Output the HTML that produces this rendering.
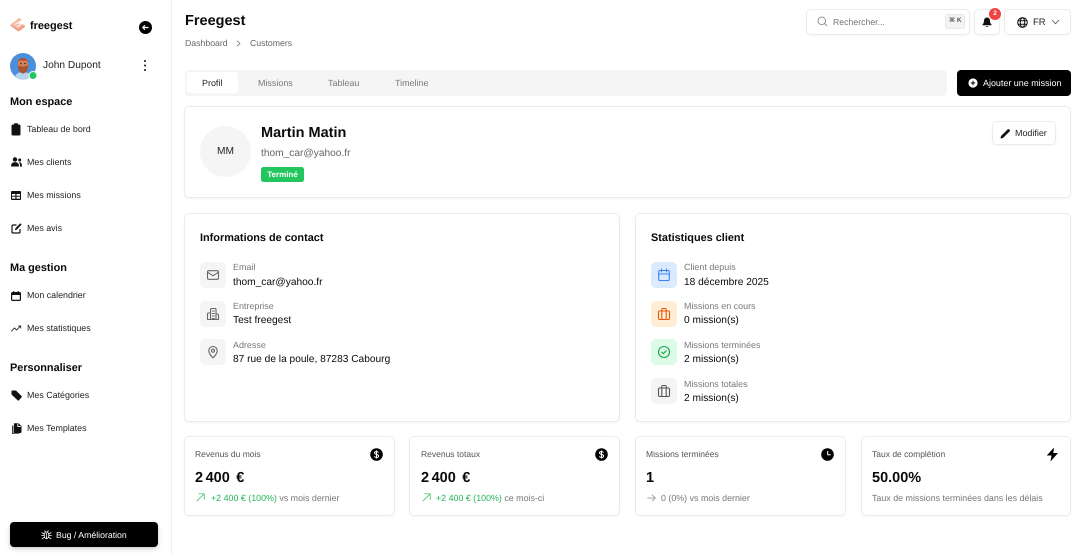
<!DOCTYPE html>
<html lang="fr"><head><meta charset="utf-8"><title>Freegest</title>
<style>
*{box-sizing:border-box}
html,body{margin:0;padding:0}
body{width:1080px;height:556px;overflow:hidden;background:#fff;font-family:"Liberation Sans",sans-serif;color:#0a0a0a;position:relative;text-rendering:geometricPrecision}
.t{position:absolute;white-space:nowrap;line-height:1}
.b{position:absolute;background:#fff;border:1px solid #ebebeb;border-radius:5px;box-shadow:0 1px 2px rgba(0,0,0,.04)}
svg{position:absolute;display:block}
.nav{font-size:8.9px;color:#222}
.h{font-size:10.9px;font-weight:700;color:#0a0a0a}
.lab{font-size:8.95px;color:#777}
.val{font-size:10.18px;color:#0a0a0a}
.ib{position:absolute;width:26px;height:26px;border-radius:5px;background:#f5f5f5}
.ib svg{left:6px;top:6px;width:14px;height:14px;fill:none;stroke:#666;stroke-width:1.1;stroke-linecap:round;stroke-linejoin:round}
.kl{font-size:8.5px;color:#555}
.kv{font-size:14.5px;font-weight:700;color:#0a0a0a}
.ks{font-size:8.9px;color:#777}
.g{color:#22b558}
.tab{font-size:8.95px;color:#777}
</style></head><body>

<!-- sidebar -->
<div style="position:absolute;left:171px;top:0;width:1px;height:556px;background:#efefef"></div>
<svg style="left:9px;top:17px" width="18" height="16" viewBox="0 0 18 16"><path d="M1 8 L10 1 L13 2.500 L8 6 L16 8 L16 10 L11 14 L9 14.500 Z" fill="#f6b9a5"/><path d="M2 8.500 L9 13 L15 9" fill="none" stroke="#ee8a6e" stroke-width="1"/><path d="M6 7.500 L10 5 M8 9.500 L12 7.500" stroke="#fff" stroke-width="1"/></svg>
<div class="t" style="left:30px;top:21px;font-size:10.9px;font-weight:700">freegest</div>
<svg style="left:139px;top:21px" width="13" height="13" viewBox="0 0 13 13"><circle cx="6.500" cy="6.500" r="6.500" fill="#000"/><path d="M9.500 6.500H4M6 4.300 3.800 6.500 6 8.700" fill="none" stroke="#fff" stroke-width="1.200"/></svg>

<svg style="left:10px;top:53px" width="28" height="28" viewBox="0 0 28 28"><circle cx="13" cy="13" r="13" fill="#4a90dc"/><path d="M5 24 C6 20 10 19 13 19 C16 19 20 20 21 24 A13 13 0 0 1 5 24Z" fill="#b5d3ea"/><rect x="8" y="5" width="10" height="12" rx="4" fill="#d9805c"/><path d="M7.500 10 C7.500 3.500 18.500 3.500 18.500 10 L17 7.500 H9Z" fill="#a44b2a"/><path d="M8 12 C9 14 17 14 18 12 C18.500 18 15 20.500 13 20.500 C11 20.500 7.500 18 8 12Z" fill="#a9542f"/><circle cx="11" cy="10.500" r=".8" fill="#222"/><circle cx="15" cy="10.500" r=".8" fill="#222"/><circle cx="23" cy="22.500" r="4" fill="#22c55e" stroke="#fff" stroke-width="1"/></svg>
<div class="t" style="left:43px;top:61px;font-size:10.18px;color:#222">John Dupont</div>
<svg style="left:143px;top:59px" width="4" height="13" viewBox="0 0 4 13"><circle cx="2" cy="2" r="1" fill="#111"/><circle cx="2" cy="6.500" r="1" fill="#111"/><circle cx="2" cy="11" r="1" fill="#111"/></svg>

<div class="t h" style="left:10px;top:97px">Mon espace</div>
<svg style="left:11px;top:123px" width="10" height="13" viewBox="0 0 10 13"><rect x=".5" y="1.500" width="9" height="11" rx="1.500" fill="#111"/><rect x="3" y=".3" width="4" height="2.400" rx=".6" fill="#111"/></svg>
<div class="t nav" style="left:27px;top:125px">Tableau de bord</div>
<svg style="left:11px;top:157px" width="11" height="10" viewBox="0 0 11 10"><circle cx="4" cy="2.500" r="2.200" fill="#111"/><path d="M0 9.500C0 6 2 5.300 4 5.300S8 6 8 9.500Z" fill="#111"/><circle cx="8.700" cy="3" r="1.500" fill="#111"/><path d="M8.500 5.300C10 5.300 11 6.500 11 9.500H9C9 7.500 8.800 6.300 8 5.600Z" fill="#111"/></svg>
<div class="t nav" style="left:27px;top:158px">Mes clients</div>
<svg style="left:11px;top:191px" width="10" height="9" viewBox="0 0 10 9"><rect width="10" height="9" rx="1" fill="#111"/><path d="M1 3h3.400v1.800H1zM5.500 3H9v1.800H5.500zM1 5.800h3.400v1.800H1zM5.500 5.800H9v1.800H5.500z" fill="#fff"/></svg>
<div class="t nav" style="left:27px;top:191px">Mes missions</div>
<svg style="left:11px;top:223px" width="11" height="11" viewBox="0 0 11 11"><path d="M5.500 2H2a1 1 0 0 0-1 1v6a1 1 0 0 0 1 1h6a1 1 0 0 0 1-1V6" fill="none" stroke="#111" stroke-width="1.200"/><path d="M4 7.200 4.400 5.200 8.800.8a.8.800 0 0 1 1.300 1.300L5.800 6.600Z" fill="#111"/></svg>
<div class="t nav" style="left:27px;top:224px">Mes avis</div>

<div class="t h" style="left:10px;top:263px">Ma gestion</div>
<svg style="left:11px;top:291px" width="10" height="10" viewBox="0 0 10 10"><rect x=".6" y="1.600" width="8.800" height="7.800" rx="1" fill="none" stroke="#111" stroke-width="1.200"/><rect x=".6" y="1.600" width="8.800" height="2.400" fill="#111"/><path d="M2.800 0v2M7.200 0v2" stroke="#111" stroke-width="1.100"/></svg>
<div class="t nav" style="left:27px;top:291px">Mon calendrier</div>
<svg style="left:11px;top:325px" width="11" height="7" viewBox="0 0 11 7"><path d="M.3 6.300 3.500 3l2 2 4-4M7.300 1h2.400v2.400" fill="none" stroke="#111" stroke-width=".8"/></svg>
<div class="t nav" style="left:27px;top:324px">Mes statistiques</div>

<div class="t h" style="left:10px;top:363px">Personnaliser</div>
<svg style="left:11px;top:390px" width="11" height="11" viewBox="0 0 11 11"><path d="M.5 1.200a.7.700 0 0 1 .7-.7H5l5.500 5.500a1 1 0 0 1 0 1.400L8 10.300a1 1 0 0 1-1.400 0L.5 4.500Z" fill="#111"/></svg>
<div class="t nav" style="left:27px;top:391px">Mes Catégories</div>
<svg style="left:11px;top:423px" width="11" height="11" viewBox="0 0 11 11"><path d="M3 .3h4.500L10.500 3v6a1 1 0 0 1-1 1H3Z" fill="#111"/><path d="M1.800 2.500V11h6.500" fill="none" stroke="#111" stroke-width="1.200"/><path d="M6.800.6V3.400h3" fill="none" stroke="#fff" stroke-width=".9"/></svg>
<div class="t nav" style="left:27px;top:424px">Mes Templates</div>

<div style="position:absolute;left:10px;top:522px;width:148px;height:25px;background:#000;border-radius:4px;box-shadow:0 2px 5px rgba(0,0,0,.2)"></div>
<svg style="left:41px;top:529px" width="11" height="11" viewBox="0 0 11 11" fill="none" stroke="#fff" stroke-width=".8"><ellipse cx="5.500" cy="6.300" rx="2.300" ry="3.400"/><path d="M3.600 1.500 4.500 3M7.400 1.500 6.500 3M.6 3.500 3.300 5M10.400 3.500 7.700 5M.3 6.500h2.900M7.800 6.500h2.900M.8 10 3.400 8.200M10.200 10 7.600 8.200M5.500 4v5.500"/></svg>
<div class="t" style="left:56px;top:531px;font-size:8.73px;color:#fff">Bug / Amélioration</div>

<!-- header -->
<div class="t" style="left:185px;top:14px;font-size:14.5px;font-weight:700">Freegest</div>
<div class="t" style="left:185px;top:39px;font-size:8.73px;color:#666">Dashboard</div>
<svg style="left:236px;top:40px" width="5" height="7" viewBox="0 0 5 7"><path d="M1 .7 4 3.500 1 6.300" fill="none" stroke="#666" stroke-width=".7"/></svg>
<div class="t" style="left:250px;top:39px;font-size:8.73px;color:#666">Customers</div>

<div class="b" style="left:806px;top:9px;width:164px;height:26px"></div>
<svg style="left:817px;top:16px" width="11" height="11" viewBox="0 0 11 11"><circle cx="4.800" cy="4.800" r="3.800" fill="none" stroke="#777" stroke-width=".8"/><path d="M7.600 7.600 10 10" stroke="#777" stroke-width=".8"/></svg>
<div class="t" style="left:833px;top:18px;font-size:8.73px;color:#777">Rechercher...</div>
<div style="position:absolute;left:945px;top:14px;width:20px;height:15px;background:#f3f3f3;border:1px solid #e8e8e8;border-radius:3px"></div>
<div class="t" style="left:949px;top:18px;font-size:6.500px;font-weight:700;color:#555;font-family:'Liberation Sans','DejaVu Sans',sans-serif">⌘ K</div>

<div class="b" style="left:974px;top:9px;width:26px;height:26px"></div>
<svg style="left:982px;top:17px" width="10" height="11" viewBox="0 0 10 11"><path d="M5 .5C3 .5 2 2 2 3.800c0 2.700-1.500 3.700-1.500 3.700v.8h9v-.8S8 6.500 8 3.800C8 2 7 .5 5 .5Z" fill="#111"/><path d="M3.700 9.300a1.400 1.400 0 0 0 2.600 0Z" fill="#111"/></svg>
<div style="position:absolute;left:989px;top:8px;width:12px;height:12px;background:#ef4444;border-radius:50%;color:#fff;font-size:6.500px;font-weight:700;text-align:center;line-height:12px">2</div>

<div class="b" style="left:1004px;top:9px;width:67px;height:26px"></div>
<svg style="left:1017px;top:17px" width="11" height="11" viewBox="0 0 11 11" fill="none" stroke="#111" stroke-width="1"><circle cx="5.500" cy="5.500" r="4.800"/><ellipse cx="5.500" cy="5.500" rx="2.200" ry="4.800"/><path d="M1 3.800h9M1 7.200h9"/></svg>
<div class="t" style="left:1033px;top:18px;font-size:9.450px;color:#222">FR</div>
<svg style="left:1051px;top:19px" width="9" height="6" viewBox="0 0 9 6"><path d="M1 1 4.500 4.800 8 1" fill="none" stroke="#555" stroke-width=".8"/></svg>

<!-- tabs -->
<div style="position:absolute;left:185px;top:70px;width:762px;height:26px;background:#f5f5f5;border-radius:4px"></div>
<div style="position:absolute;left:187px;top:72px;width:51px;height:21px;background:#fff;border-radius:3px"></div>
<div class="t" style="left:202px;top:78.500px;font-size:8.950px;color:#222">Profil</div>
<div class="t tab" style="left:258px;top:78.500px">Missions</div>
<div class="t tab" style="left:328px;top:78.500px">Tableau</div>
<div class="t tab" style="left:395px;top:78.500px">Timeline</div>

<div style="position:absolute;left:957px;top:70px;width:114px;height:26px;background:#000;border-radius:4px"></div>
<svg style="left:968px;top:78px" width="10" height="10" viewBox="0 0 10 10"><circle cx="5" cy="5" r="4.600" fill="#fff"/><path d="M5 2.800v4.400M2.800 5h4.400" stroke="#000" stroke-width="1"/></svg>
<div class="t" style="left:983px;top:78.500px;font-size:8.950px;color:#fff">Ajouter une mission</div>

<!-- profile -->
<div class="b" style="left:184px;top:106px;width:887px;height:92px"></div>
<div style="position:absolute;left:200px;top:126px;width:51px;height:51px;background:#f5f5f5;border-radius:50%;text-align:center;line-height:51px;font-size:10.180px;color:#222">MM</div>
<div class="t" style="left:261px;top:126px;font-size:14.500px;font-weight:700">Martin Matin</div>
<div class="t" style="left:261px;top:149px;font-size:10.180px;color:#666">thom_car@yahoo.fr</div>
<div style="position:absolute;left:261px;top:167px;width:43px;height:15px;background:#22c55e;border-radius:2.500px;color:#fff;font-size:8px;font-weight:700;text-align:center;line-height:15px">Terminé</div>
<div class="b" style="left:992px;top:121px;width:64px;height:24px"></div>
<svg style="left:1000px;top:128px" width="11" height="11" viewBox="0 0 11 11"><path d="M.5 10.500 1 8 7.800 1.200a.8.800 0 0 1 1.100 0l.9.900a.8.800 0 0 1 0 1.100L3 10Z" fill="#111"/></svg>
<div class="t" style="left:1015px;top:129px;font-size:8.950px;color:#222">Modifier</div>

<!-- contact -->
<div class="b" style="left:184px;top:213px;width:436px;height:209px"></div>
<div class="t" style="left:200px;top:233px;font-size:10.900px;font-weight:700">Informations de contact</div>
<div class="ib" style="left:200px;top:262px"><svg viewBox="0 0 14 14"><rect x="1.500" y="2.700" width="11" height="8.600" rx="1.300"/><path d="M1.500 4.200 7 7.800l5.500-3.600"/></svg></div>
<div class="t lab" style="left:233px;top:263px">Email</div>
<div class="t val" style="left:233px;top:278px">thom_car@yahoo.fr</div>
<div class="ib" style="left:200px;top:301px"><svg viewBox="0 0 14 14"><path d="M4.500 12.500V2.500a1 1 0 0 1 1-1h3.500a1 1 0 0 1 1 1v10M4.500 6H2.500a1 1 0 0 0-1 1v5.500h11V8a1 1 0 0 0-1-1H10M6.300 4h2M6.300 6.500h2M6.300 9h2M6.300 11.500h2"/></svg></div>
<div class="t lab" style="left:233px;top:302px">Entreprise</div>
<div class="t val" style="left:233px;top:316px">Test freegest</div>
<div class="ib" style="left:200px;top:339px"><svg viewBox="0 0 14 14"><path d="M7 12.800S2.800 9 2.800 5.700a4.200 4.200 0 0 1 8.400 0C11.200 9 7 12.800 7 12.800Z"/><circle cx="7" cy="5.700" r="1.500"/></svg></div>
<div class="t lab" style="left:233px;top:341px">Adresse</div>
<div class="t val" style="left:233px;top:355px">87 rue de la poule, 87283 Cabourg</div>

<!-- stats -->
<div class="b" style="left:635px;top:213px;width:436px;height:209px"></div>
<div class="t" style="left:651px;top:233px;font-size:10.900px;font-weight:700">Statistiques client</div>
<div class="ib" style="left:651px;top:262px;background:#dbeafe"><svg viewBox="0 0 14 14" style="stroke:#3b82f6"><rect x="1.700" y="2.500" width="10.600" height="10" rx="1.300"/><path d="M1.700 6h10.600M4.500 1v3M9.500 1v3"/></svg></div>
<div class="t lab" style="left:684px;top:263px">Client depuis</div>
<div class="t val" style="left:684px;top:278px">18 décembre 2025</div>
<div class="ib" style="left:651px;top:301px;background:#ffedd5"><svg viewBox="0 0 14 14" style="stroke:#ea580c"><rect x="1.500" y="4" width="11" height="8.500" rx="1.200"/><path d="M4.800 4V2.500a1 1 0 0 1 1-1h2.400a1 1 0 0 1 1 1V4M4.800 4v8.500M9.200 4v8.500"/></svg></div>
<div class="t lab" style="left:684px;top:302px">Missions en cours</div>
<div class="t val" style="left:684px;top:316px">0 mission(s)</div>
<div class="ib" style="left:651px;top:339px;background:#dcfce7"><svg viewBox="0 0 14 14" style="stroke:#16a34a"><circle cx="7" cy="7" r="5.500"/><path d="M4.800 7.200 6.300 8.700 9.200 5.700"/></svg></div>
<div class="t lab" style="left:684px;top:341px">Missions terminées</div>
<div class="t val" style="left:684px;top:355px">2 mission(s)</div>
<div class="ib" style="left:651px;top:378px;background:#f3f4f6"><svg viewBox="0 0 14 14" style="stroke:#555"><rect x="1.500" y="4" width="11" height="8.500" rx="1.200"/><path d="M4.800 4V2.500a1 1 0 0 1 1-1h2.400a1 1 0 0 1 1 1V4M4.800 4v8.500M9.200 4v8.500"/></svg></div>
<div class="t lab" style="left:684px;top:380px">Missions totales</div>
<div class="t val" style="left:684px;top:394px">2 mission(s)</div>

<!-- KPI -->
<div class="b" style="left:184px;top:436px;width:211px;height:80px"></div>
<div class="t kl" style="left:195px;top:450px">Revenus du mois</div>
<svg style="left:370px;top:448px" width="13" height="13" viewBox="0 0 13 13"><circle cx="6.500" cy="6.500" r="6.300" fill="#000"/><path d="M8.500 4.600C8 3.800 7.300 3.500 6.400 3.500 5.300 3.500 4.500 4 4.500 4.900 4.500 6.900 8.600 5.900 8.600 8 8.600 9 7.700 9.500 6.500 9.500 5.500 9.500 4.800 9.100 4.400 8.400M6.500 2.500v8" fill="none" stroke="#fff" stroke-width="1"/></svg>
<div class="t kv" style="left:195px;top:471px">2<span style="margin-left:2.500px;word-spacing:2.500px">400 €</span></div>
<svg style="left:196px;top:493px" width="9" height="9" viewBox="0 0 9 9"><path d="M.7 8.300 8.200.8M2.400.8h5.800v5.800" fill="none" stroke="#22b558" stroke-width=".7"/></svg>
<div class="t ks" style="left:211px;top:494px"><span class="g">+2 400 € (100%)</span> vs mois dernier</div>

<div class="b" style="left:409px;top:436px;width:211px;height:80px"></div>
<div class="t kl" style="left:421px;top:450px">Revenus totaux</div>
<svg style="left:595px;top:448px" width="13" height="13" viewBox="0 0 13 13"><circle cx="6.500" cy="6.500" r="6.300" fill="#000"/><path d="M8.500 4.600C8 3.800 7.300 3.500 6.400 3.500 5.300 3.500 4.500 4 4.500 4.900 4.500 6.900 8.600 5.900 8.600 8 8.600 9 7.700 9.500 6.500 9.500 5.500 9.500 4.800 9.100 4.400 8.400M6.500 2.500v8" fill="none" stroke="#fff" stroke-width="1"/></svg>
<div class="t kv" style="left:421px;top:471px">2<span style="margin-left:2.500px;word-spacing:2.500px">400 €</span></div>
<svg style="left:422px;top:493px" width="9" height="9" viewBox="0 0 9 9"><path d="M.7 8.300 8.200.8M2.400.8h5.800v5.800" fill="none" stroke="#22b558" stroke-width=".7"/></svg>
<div class="t ks" style="left:436px;top:494px"><span class="g">+2 400 € (100%)</span> ce mois-ci</div>

<div class="b" style="left:635px;top:436px;width:211px;height:80px"></div>
<div class="t kl" style="left:646px;top:450px">Missions terminées</div>
<svg style="left:821px;top:448px" width="13" height="13" viewBox="0 0 13 13"><circle cx="6.500" cy="6.500" r="6.300" fill="#000"/><path d="M6.700 3v3.700h3" fill="none" stroke="#fff" stroke-width="1"/></svg>
<div class="t kv" style="left:646px;top:471px">1</div>
<svg style="left:647px;top:494px" width="9" height="8" viewBox="0 0 9 8"><path d="M.3 4h8M5 .8 8.300 4 5 7.200" fill="none" stroke="#888" stroke-width=".7"/></svg>
<div class="t ks" style="left:661px;top:494px">0 (0%) vs mois dernier</div>

<div class="b" style="left:861px;top:436px;width:210px;height:80px"></div>
<div class="t kl" style="left:872px;top:450px">Taux de complétion</div>
<svg style="left:1046px;top:447px" width="13" height="15" viewBox="0 0 13 15"><path d="M8 .5 .8 8.500H5.500L4.500 14.500 12 6H7.300Z" fill="#000"/></svg>
<div class="t kv" style="left:872px;top:471px">50.00%</div>
<div class="t ks" style="left:872px;top:494px">Taux de missions terminées dans les délais</div>

</body></html>
